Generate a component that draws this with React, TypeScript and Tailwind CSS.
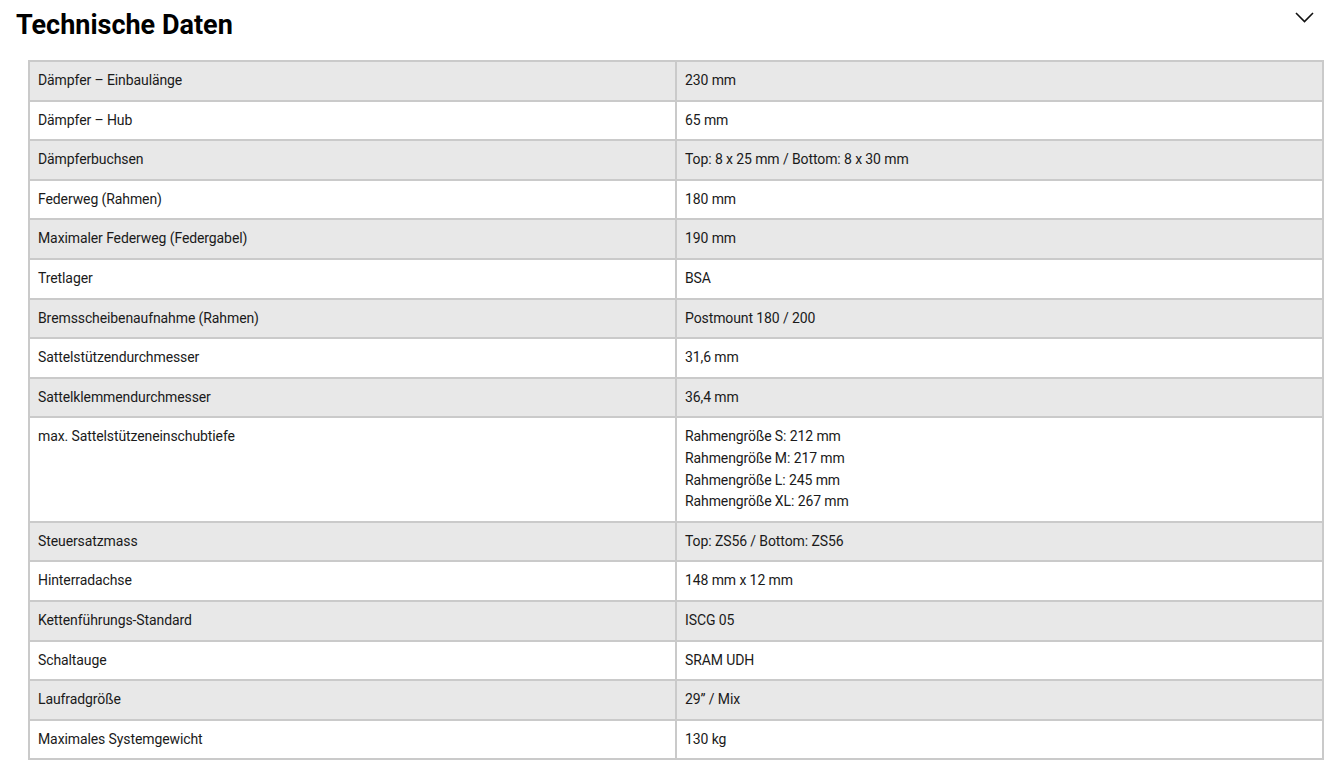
const rows: [string, string[]][] = [
  ['Dämpfer – Einbaulänge', ['230 mm']],
  ['Dämpfer – Hub', ['65 mm']],
  ['Dämpferbuchsen', ['Top: 8 x 25 mm / Bottom: 8 x 30 mm']],
  ['Federweg (Rahmen)', ['180 mm']],
  ['Maximaler Federweg (Federgabel)', ['190 mm']],
  ['Tretlager', ['BSA']],
  ['Bremsscheibenaufnahme (Rahmen)', ['Postmount 180 / 200']],
  ['Sattelstützendurchmesser', ['31,6 mm']],
  ['Sattelklemmendurchmesser', ['36,4 mm']],
  [
    'max. Sattelstützeneinschubtiefe',
    ['Rahmengröße S: 212 mm', 'Rahmengröße M: 217 mm', 'Rahmengröße L: 245 mm', 'Rahmengröße XL: 267 mm'],
  ],
  ['Steuersatzmass', ['Top: ZS56 / Bottom: ZS56']],
  ['Hinterradachse', ['148 mm x 12 mm']],
  ['Kettenführungs-Standard', ['ISCG 05']],
  ['Schaltauge', ['SRAM UDH']],
  ['Laufradgröße', ['29” / Mix']],
  ['Maximales Systemgewicht', ['130 kg']],
]

export default function App() {
  return (
    <div className="bg-white min-h-screen text-[#1a1a1a]" style={{ fontFamily: 'Roboto, "Liberation Sans", sans-serif' }}>
      {/* Header */}
      <div className="flex items-start justify-between pl-4 pr-[20px] pt-[6px] h-[60px]">
        <h2 className="text-[27px] leading-[38px] font-bold text-black">Technische Daten</h2>
        <svg className="mt-[6px]" width="19" height="11" viewBox="0 0 19 11" fill="none">
          <polyline points="1,1 9.5,9.5 18,1" stroke="#111" strokeWidth="1.6" />
        </svg>
      </div>

      {/* Specs table */}
      <div className="ml-[28px] mr-[10px]">
        <table className="w-full border-collapse table-fixed text-[14px] leading-[21.6px] tracking-[-0.1px]">
          <tbody>
            {rows.map(([label, values], i) => (
              <tr key={label} className={i % 2 === 0 ? 'bg-[#e8e8e8]' : 'bg-white'}>
                <td className="w-1/2 border-2 border-[#cacaca] px-2 py-2 align-top">{label}</td>
                <td className="w-1/2 border-2 border-[#cacaca] px-2 py-2 align-top">
                  {values.map((v) => (
                    <div key={v}>{v}</div>
                  ))}
                </td>
              </tr>
            ))}
          </tbody>
        </table>
      </div>
    </div>
  )
}
